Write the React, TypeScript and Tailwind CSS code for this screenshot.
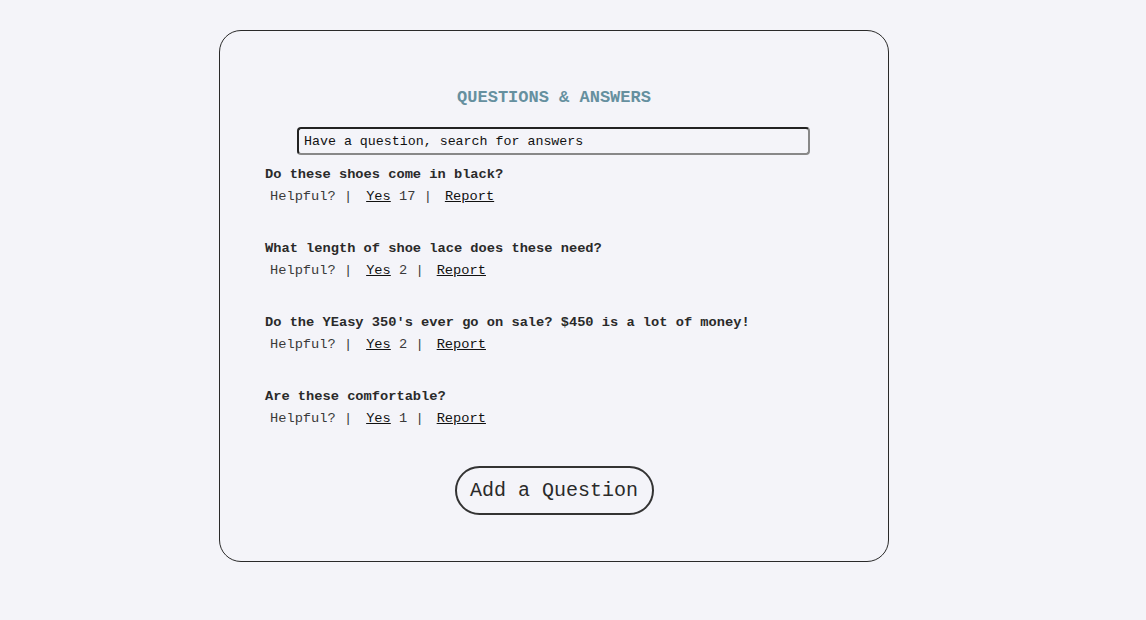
import React from "react";

const questions = [
  { q: "Do these shoes come in black?", yes: 17 },
  { q: "What length of shoe lace does these need?", yes: 2 },
  { q: "Do the YEasy 350's ever go on sale? $450 is a lot of money!", yes: 2 },
  { q: "Are these comfortable?", yes: 1 },
];

export default function App() {
  return (
    <div
      className="min-h-[620px] w-full bg-[#f4f4f9] pt-[30px]"
      style={{ fontFamily: '"Liberation Mono", "Courier New", monospace' }}
    >
      <div className="ml-[219px] w-[670px] h-[532px] rounded-[22px] border-[1.5px] border-[#2a2a2a] flex flex-col items-center pt-[57px]">
        <h2 className="h-[20px] leading-[20px] text-[17px] font-bold text-[#66909f]">
          QUESTIONS &amp; ANSWERS
        </h2>
        <input
          className="ml-[-1px] mt-[19px] w-[513px] h-[28px] rounded-[4px] border-2 border-t-[#222] border-l-[#222] border-r-[#888] border-b-[#888] bg-[#f4f4f9] px-[5px] text-[13.3px] text-[#111] placeholder:text-[#111] outline-none"
          style={{ fontFamily: '"Liberation Mono", "Courier New", monospace' }}
          placeholder="Have a question, search for answers"
        />
        <div className="self-stretch pl-[45px] mt-[10px] flex flex-col gap-[32px]">
          {questions.map((item, i) => (
            <div key={i} className="flex flex-col gap-[2px]">
              <div className="h-[20px] leading-[20px] text-[13.7px] font-bold text-[#2a2a2a]">
                {item.q}
              </div>
              <div className="h-[20px] leading-[20px] text-[13.7px] text-[#3a3a3a] whitespace-pre pl-[5px]">
                {"Helpful? |"}
                <span className="underline text-[#111] ml-[14px]">Yes</span>
                {` ${item.yes} |`}
                <span className="underline text-[#111] ml-[13px]">Report</span>
              </div>
            </div>
          ))}
        </div>
        <button
          className="mt-[37px] w-[199px] h-[49px] rounded-full border-2 border-[#333] text-[20px] text-[#2a2a2a] bg-transparent"
          style={{ fontFamily: '"Liberation Mono", "Courier New", monospace' }}
        >
          Add a Question
        </button>
      </div>
    </div>
  );
}
